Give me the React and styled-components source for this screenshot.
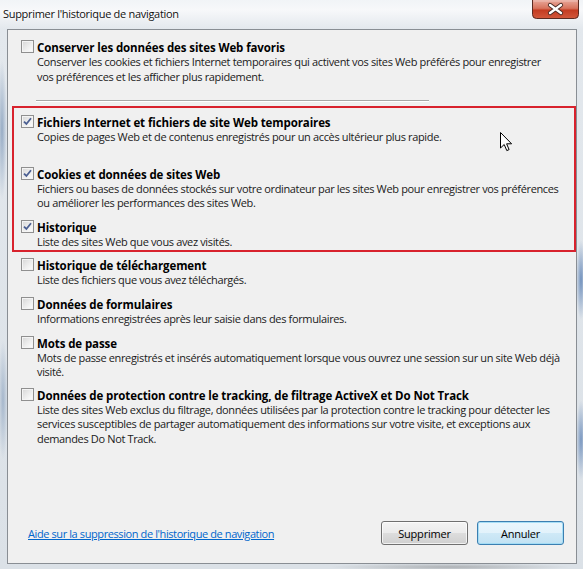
import React from 'react'
import styled, {createGlobalStyle} from 'styled-components'

const GlobalStyle = createGlobalStyle`
  html, body {
    margin: 0;
    padding: 0;
    background: #dfe5eb;
  }

  body {
    font-family: "Open Sans", "Noto Sans", sans-serif;
    font-size: 11px;
    color: #000;
  }
`

const Window = styled.div`
  position: relative;
  width: 583px;
  height: 569px;
  display: flex;
  flex-direction: column;
  box-sizing: border-box;
  background:
    radial-gradient(ellipse 5px 70px at 2px 130px, rgba(60, 100, 150, 0.45), transparent),
    radial-gradient(ellipse 5px 60px at 3px 400px, rgba(60, 100, 150, 0.35), transparent),
    radial-gradient(ellipse 5px 40px at 581px 280px, rgba(40, 90, 160, 0.6), transparent),
    radial-gradient(ellipse 5px 40px at 581px 440px, rgba(40, 90, 160, 0.55), transparent),
    radial-gradient(ellipse 120px 4px at 450px 567px, rgba(90, 90, 90, 0.35), transparent),
    linear-gradient(to bottom, #f1f4f7 0, #f7f8fa 10px, #e3e8ed 29px, #dbe1e7 100%);
`

const TitleBar = styled.div`
  height: 29px;
  display: flex;
  align-items: flex-start;
  justify-content: space-between;
  padding-left: 3px;
`

const Title = styled.span`
  margin-top: 6px;
  font-size: 11px;
  letter-spacing: -0.3px;
  color: #111;
  text-shadow: 0 0 6px #fff, 0 0 3px #fff;
`

const Panel = styled.div`
  position: relative;
  flex: 1;
  margin: 0 6px 5px 7px;
  padding: 10px 12px 18px 13px;
  border: 1px solid #898e94;
  background: #f0f0f0;
  display: flex;
  flex-direction: column;
`

const Option = styled.div`
  display: flex;
  align-items: flex-start;
  gap: 2px;
  margin-bottom: ${(p) => p.$gap}px;
`

const Box = styled.span`
  flex: none;
  width: 13px;
  height: 13px;
  box-sizing: border-box;
  border: 1px solid #8f8f8f;
  background: linear-gradient(135deg, #d6d6d6 0%, #eeeeee 55%, #ffffff 100%);
  box-shadow: inset 0 0 0 1px #f4f4f4;
  display: flex;
  align-items: center;
  justify-content: center;
`

const OptionText = styled.div`
  display: flex;
  flex-direction: column;
  margin-left: 1px;
`

const Heading = styled.span`
  font-size: 11.5px;
  font-weight: 700;
  line-height: 15px;
  letter-spacing: -0.1px;
  white-space: nowrap;
`

const Desc = styled.span`
  line-height: 14.5px;
  letter-spacing: -0.35px;
  white-space: nowrap;
  color: #1a1a1a;
`

const Separator = styled.div`
  margin: 16px 0 5px 15px;
  width: 393px;
  height: 1px;
  background: #a7a7a7;
  box-shadow: 0 1px 0 #fff;
`

const Highlight = styled.div`
  margin: 0 -12px 6px -9px;
  padding: 7px 0 1px 7px;
  border: 2px solid #d8222d;
`

const Footer = styled.div`
  margin-top: auto;
  display: flex;
  align-items: center;
`

const HelpLink = styled.a`
  margin-left: 7px;
  color: #0066cc;
  text-decoration: underline;
  letter-spacing: -0.4px;
  cursor: pointer;
`

const Buttons = styled.div`
  margin-left: auto;
  display: flex;
  gap: 9px;
`

const Button = styled.button`
  width: 87px;
  height: 24px;
  padding: 0;
  font-family: inherit;
  font-size: 11px;
  letter-spacing: -0.2px;
  color: #000;
  border-radius: 3px;
  border: 1px solid ${(p) => (p.$primary ? '#3c7fb1' : '#707070')};
  background: ${(p) =>
    p.$primary
      ? 'linear-gradient(to bottom, #eaf6fd 0%, #e2f2fb 50%, #cfe9f7 51%, #c2e2f3 100%)'
      : 'linear-gradient(to bottom, #f4f4f4 0%, #ebebeb 50%, #dddddd 51%, #d0d0d0 100%)'};
  box-shadow: inset 0 0 0 1px
    ${(p) => (p.$primary ? 'rgba(160, 220, 245, 0.9)' : 'rgba(255, 255, 255, 0.7)')};
`

const CloseButton = styled.span`
  margin-right: 4px;
  display: block;
  line-height: 0;
`

const Pointer = styled.span`
  position: absolute;
  left: 492px;
  top: 102px;
  line-height: 0;
  pointer-events: none;
`

const options = [
  {
    title: 'Conserver les données des sites Web favoris',
    lines: [
      'Conserver les cookies et fichiers Internet temporaires qui activent vos sites Web préférés pour enregistrer',
      'vos préférences et les afficher plus rapidement.',
    ],
  },
]

const selected = [
  {
    title: 'Fichiers Internet et fichiers de site Web temporaires',
    lines: ['Copies de pages Web et de contenus enregistrés pour un accès ultérieur plus rapide.'],
    checked: true,
    gap: 22,
  },
  {
    title: 'Cookies et données de sites Web',
    lines: [
      'Fichiers ou bases de données stockés sur votre ordinateur par les sites Web pour enregistrer vos préférences',
      'ou améliorer les performances des sites Web.',
    ],
    checked: true,
  },
  {
    title: 'Historique',
    lines: ['Liste des sites Web que vous avez visités.'],
    checked: true,
    gap: 0,
  },
]

const others = [
  {
    title: 'Historique de téléchargement',
    lines: ['Liste des fichiers que vous avez téléchargés.'],
    gap: 9.5,
  },
  {
    title: 'Données de formulaires',
    lines: ['Informations enregistrées après leur saisie dans des formulaires.'],
  },
  {
    title: 'Mots de passe',
    lines: [
      'Mots de passe enregistrés et insérés automatiquement lorsque vous ouvrez une session sur un site Web déjà',
      'visité.',
    ],
    gap: 8,
  },
  {
    title: 'Données de protection contre le tracking, de filtrage ActiveX et Do Not Track',
    lines: [
      'Liste des sites Web exclus du filtrage, données utilisées par la protection contre le tracking pour détecter les',
      'services susceptibles de partager automatiquement des informations sur votre visite, et exceptions aux',
      'demandes Do Not Track.',
    ],
    gap: 0,
  },
]

function Checkbox({checked}) {
  return (
    <Box>
      {checked && (
        <svg width="9" height="9" viewBox="0 0 9 9">
          <path
            d="M1 4.6 L3.4 7 L8 1.3"
            fill="none"
            stroke="#4b5f92"
            strokeWidth="1.8"
            strokeLinejoin="miter"
          />
        </svg>
      )}
    </Box>
  )
}

function OptionItem({title, lines, checked, gap = 9}) {
  return (
    <Option $gap={gap}>
      <Checkbox checked={checked} />
      <OptionText>
        <Heading>{title}</Heading>
        {lines.map((line) => (
          <Desc key={line}>{line}</Desc>
        ))}
      </OptionText>
    </Option>
  )
}

function CloseIcon() {
  return (
    <svg width="47" height="19" viewBox="0 0 47 19">
      <defs>
        <linearGradient id="closeFill" x1="0" y1="0" x2="0" y2="1">
          <stop offset="0" stopColor="#e9a99b" />
          <stop offset="0.45" stopColor="#d7735d" />
          <stop offset="0.55" stopColor="#c43c22" />
          <stop offset="1" stopColor="#d2583c" />
        </linearGradient>
      </defs>
      <path
        d="M0.5 0 V14.5 Q0.5 18.5 4.5 18.5 H42.5 Q46.5 18.5 46.5 14.5 V0"
        fill="url(#closeFill)"
        stroke="#5b2b22"
      />
      <path d="M1.5 1 H45.5" stroke="rgba(255,255,255,0.35)" />
      <path d="M18 5 L29 13 M29 5 L18 13" stroke="#4a2a24" strokeWidth="4.2" strokeLinecap="round" />
      <path d="M18 5 L29 13 M29 5 L18 13" stroke="#ffffff" strokeWidth="2.4" strokeLinecap="round" />
    </svg>
  )
}

function MousePointer() {
  return (
    <svg width="13" height="20" viewBox="0 0 13 20">
      <path
        d="M0.5 0.5 V16 L4.2 12.5 L6.8 18.6 L9.1 17.6 L6.6 11.8 H11.6 Z"
        fill="#ffffff"
        stroke="#000000"
        strokeWidth="1"
        strokeLinejoin="round"
      />
    </svg>
  )
}

export default function App() {
  return (
    <>
      <GlobalStyle />
      <Window>
        <TitleBar>
          <Title>Supprimer l'historique de navigation</Title>
          <CloseButton>
            <CloseIcon />
          </CloseButton>
        </TitleBar>
        <Panel>
          {options.map((o) => (
            <OptionItem key={o.title} {...o} gap={0} />
          ))}
          <Separator />
          <Highlight>
            {selected.map((o) => (
              <OptionItem key={o.title} {...o} />
            ))}
          </Highlight>
          {others.map((o) => (
            <OptionItem key={o.title} {...o} />
          ))}
          <Footer>
            <HelpLink>Aide sur la suppression de l'historique de navigation</HelpLink>
            <Buttons>
              <Button>Supprimer</Button>
              <Button $primary>Annuler</Button>
            </Buttons>
          </Footer>
          <Pointer>
            <MousePointer />
          </Pointer>
        </Panel>
      </Window>
    </>
  )
}
